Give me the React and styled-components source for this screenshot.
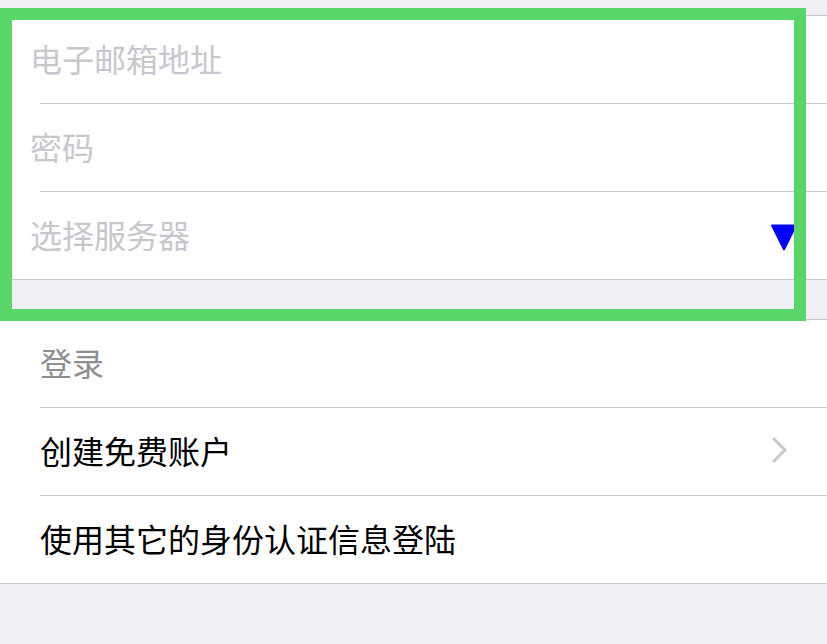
import React from 'react'
import styled, { createGlobalStyle } from 'styled-components'

const GlobalStyle = createGlobalStyle`
  html, body {
    margin: 0;
    padding: 0;
    background: #efeff4;
  }
  body {
    font-family: "Noto Sans CJK SC", "Noto Sans", sans-serif;
  }
`

export default function App() {
  return (
    <Page>
      <GlobalStyle />
      <Group>
        <Cell>
          <Field placeholder="电子邮箱地址" />
        </Cell>
        <Cell>
          <Field type="password" placeholder="密码" />
        </Cell>
        <Cell>
          <Field placeholder="选择服务器" readOnly />
          <Caret width="28" height="29" viewBox="0 0 28 29">
            <path d="M2 1.5 L26 1.5 Q27.6 1.5 26.8 3 L15.1 26.5 Q14 28.3 12.9 26.5 L1.2 3 Q0.4 1.5 2 1.5 Z" fill="#0000ff" />
          </Caret>
        </Cell>
      </Group>

      <Group $spaced>
        <Cell>
          <Label $muted>登录</Label>
        </Cell>
        <Cell>
          <Label>创建免费账户</Label>
          <Chevron width="16" height="26" viewBox="0 0 16 26">
            <path d="M2 2 L13 13 L2 24" fill="none" stroke="#c7c7cc" strokeWidth="3" strokeLinecap="round" strokeLinejoin="round" />
          </Chevron>
        </Cell>
        <Cell>
          <Label>使用其它的身份认证信息登陆</Label>
        </Cell>
      </Group>

      <Highlight />
    </Page>
  )
}

const Page = styled.div`
  position: relative;
  min-height: 644px;
  padding-top: 15px;
  box-sizing: border-box;
`

const Group = styled.div`
  background: #ffffff;
  border-top: 1px solid #c8c7cc;
  border-bottom: 1px solid #c8c7cc;
  margin-top: ${(p) => (p.$spaced ? '39px' : '0')};
`

const Cell = styled.div`
  display: flex;
  align-items: center;
  height: 83px;
  padding-bottom: 4px;
  margin-left: 40px;
  padding-right: 32px;
  border-bottom: 1px solid #c8c7cc;
  &:last-child {
    border-bottom: none;
  }
`

const Field = styled.input`
  flex: 1;
  margin-left: -10px;
  border: none;
  outline: none;
  background: transparent;
  padding: 0;
  font-family: "Noto Sans CJK SC", "Noto Sans", sans-serif;
  font-size: 32px;
  color: #000;
  &::placeholder {
    color: #c7c7cd;
  }
`

const Label = styled.span`
  flex: 1;
  font-size: 32px;
  color: ${(p) => (p.$muted ? '#8e8e93' : '#000000')};
`

const Caret = styled.svg`
  display: block;
  margin-top: 7px;
  margin-right: -3px;
`

const Chevron = styled.svg`
  display: block;
  margin-top: 1px;
  margin-right: 7px;
`

const Highlight = styled.div`
  position: absolute;
  left: 0;
  top: 8px;
  width: 806px;
  height: 313px;
  box-sizing: border-box;
  border: 12px solid #59d66a;
  pointer-events: none;
`
